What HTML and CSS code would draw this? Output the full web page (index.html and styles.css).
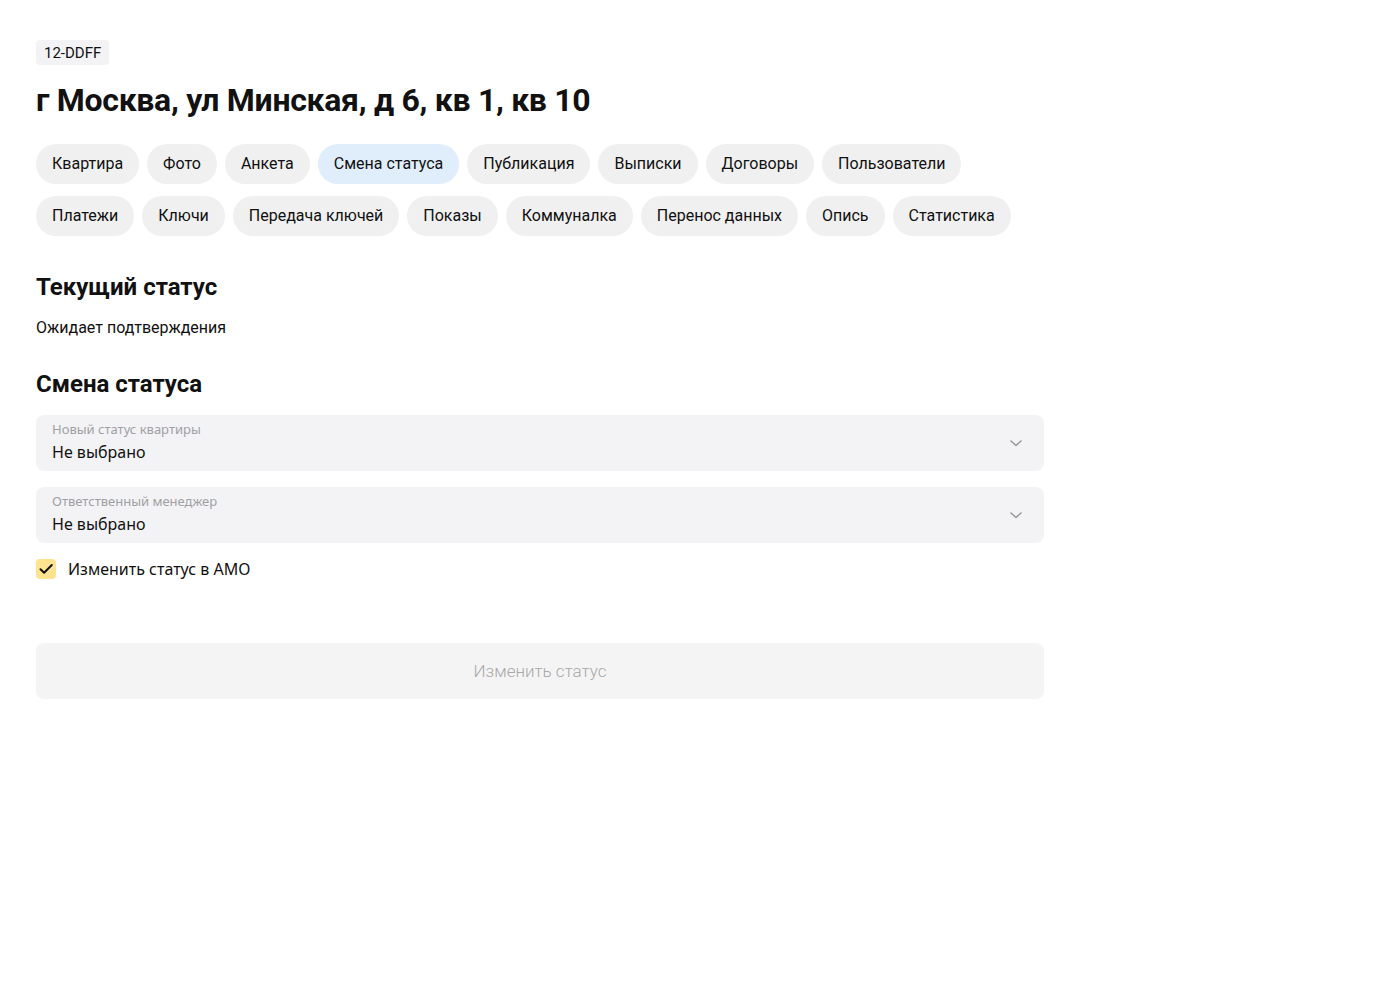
FILE: index.html
```html
<!DOCTYPE html>
<html lang="ru">
<head>
<meta charset="utf-8">
<link rel="stylesheet" href="styles.css">
</head>
<body>
<main class="page">
  <div class="badge">12-DDFF</div>
  <h1 class="title">г Москва, ул Минская, д 6, кв 1, кв 10</h1>
  <nav class="tabs">
    <div class="tab-row">
      <span class="tab">Квартира</span>
      <span class="tab">Фото</span>
      <span class="tab">Анкета</span>
      <span class="tab tab-active">Смена статуса</span>
      <span class="tab">Публикация</span>
      <span class="tab">Выписки</span>
      <span class="tab">Договоры</span>
      <span class="tab">Пользователи</span>
    </div>
    <div class="tab-row">
      <span class="tab">Платежи</span>
      <span class="tab">Ключи</span>
      <span class="tab">Передача ключей</span>
      <span class="tab">Показы</span>
      <span class="tab">Коммуналка</span>
      <span class="tab">Перенос данных</span>
      <span class="tab">Опись</span>
      <span class="tab">Статистика</span>
    </div>
  </nav>
  <section class="section">
    <h2 class="heading">Текущий статус</h2>
    <p class="status">Ожидает подтверждения</p>
  </section>
  <section class="section form">
    <h2 class="heading">Смена статуса</h2>
    <div class="select">
      <div class="select-text">
        <span class="select-label">Новый статус квартиры</span>
        <span class="select-value">Не выбрано</span>
      </div>
      <svg class="chevron" width="16" height="16" viewBox="0 0 16 16"><path d="M3 6l5 4.5L13 6" fill="none" stroke="#9a9a9e" stroke-width="1.6" stroke-linecap="round" stroke-linejoin="round"/></svg>
    </div>
    <div class="select">
      <div class="select-text">
        <span class="select-label">Ответственный менеджер</span>
        <span class="select-value">Не выбрано</span>
      </div>
      <svg class="chevron" width="16" height="16" viewBox="0 0 16 16"><path d="M3 6l5 4.5L13 6" fill="none" stroke="#9a9a9e" stroke-width="1.6" stroke-linecap="round" stroke-linejoin="round"/></svg>
    </div>
    <label class="check">
      <span class="check-box"><svg width="16" height="16" viewBox="0 0 16 16"><path d="M2.5 8.2l3.6 3.6L13.8 4" fill="none" stroke="#111" stroke-width="2" stroke-linecap="round" stroke-linejoin="round"/></svg></span>
      <span class="check-label">Изменить статус в АМО</span>
    </label>
    <button class="submit" type="button">Изменить статус</button>
  </section>
</main>
</body>
</html>
```

FILE: styles.css
```css
* { box-sizing: border-box; }
html, body { margin: 0; padding: 0; background: #fff; }
body {
  font-family: Roboto, "Noto Sans", Arial, sans-serif;
  color: #000;
}
.page {
  padding: 40px 36px;
  width: 1080px;
}
.badge {
  display: inline-block;
  background: #f3f3f5;
  border-radius: 4px;
  font-size: 15px;
  line-height: 26px;
  height: 25px;
  padding: 0 8px;
  color: #111;
}
.title {
  margin: 15px 0 0;
  font-size: 32px;
  line-height: 40px;
  font-weight: 700;
  letter-spacing: -0.3px;
  color: #111;
}
.tabs {
  margin-top: 24px;
  display: flex;
  flex-direction: column;
  gap: 12px;
}
.tab-row { display: flex; gap: 8px; }
.tab {
  height: 40px;
  line-height: 40px;
  padding: 0 16px;
  border-radius: 20px;
  background: #f0f0f0;
  font-size: 16px;
  color: #111;
  white-space: nowrap;
}
.tab-active { background: #e0edfa; }
.section { margin-top: 36px; width: 1008px; }
.heading {
  margin: 0;
  font-size: 24px;
  line-height: 30px;
  font-weight: 700;
  color: #111;
}
.status {
  margin: 15px 0 0;
  font-size: 16px;
  line-height: 22px;
  color: #111;
}
.form { margin-top: 30px; }
.select {
  margin-top: 16px;
  height: 56px;
  border-radius: 8px;
  background: #f3f3f5;
  display: flex;
  align-items: center;
  justify-content: space-between;
  padding: 0 20px 0 16px;
}
.select + .select { margin-top: 16px; }
.select-text {
  display: flex;
  flex-direction: column;
  align-self: flex-start;
  padding-top: 6px;
}
.select-label {
  font-family: "Noto Sans", "Open Sans", sans-serif;
  font-size: 13px;
  line-height: 16px;
  color: #a0a0a4;
}
.select-value {
  font-family: "Noto Sans", "Open Sans", sans-serif;
  font-size: 16px;
  line-height: 22px;
  color: #111;
  margin-top: 4px;
}
.check {
  margin-top: 16px;
  display: flex;
  align-items: center;
  gap: 12px;
}
.check-box {
  width: 20px;
  height: 20px;
  border-radius: 4px;
  background: #ffe38f;
  display: flex;
  align-items: center;
  justify-content: center;
}
.check-label {
  font-family: "Noto Sans", "Open Sans", sans-serif;
  font-size: 16px;
  line-height: 20px;
  color: #111;
}
.submit {
  display: block;
  margin-top: 64px;
  width: 100%;
  height: 56px;
  border: 0;
  border-radius: 8px;
  background: #f4f4f4;
  color: #a8a8a8;
  font-family: Roboto, sans-serif;
  font-weight: 300;
  font-size: 17px;
}
```
